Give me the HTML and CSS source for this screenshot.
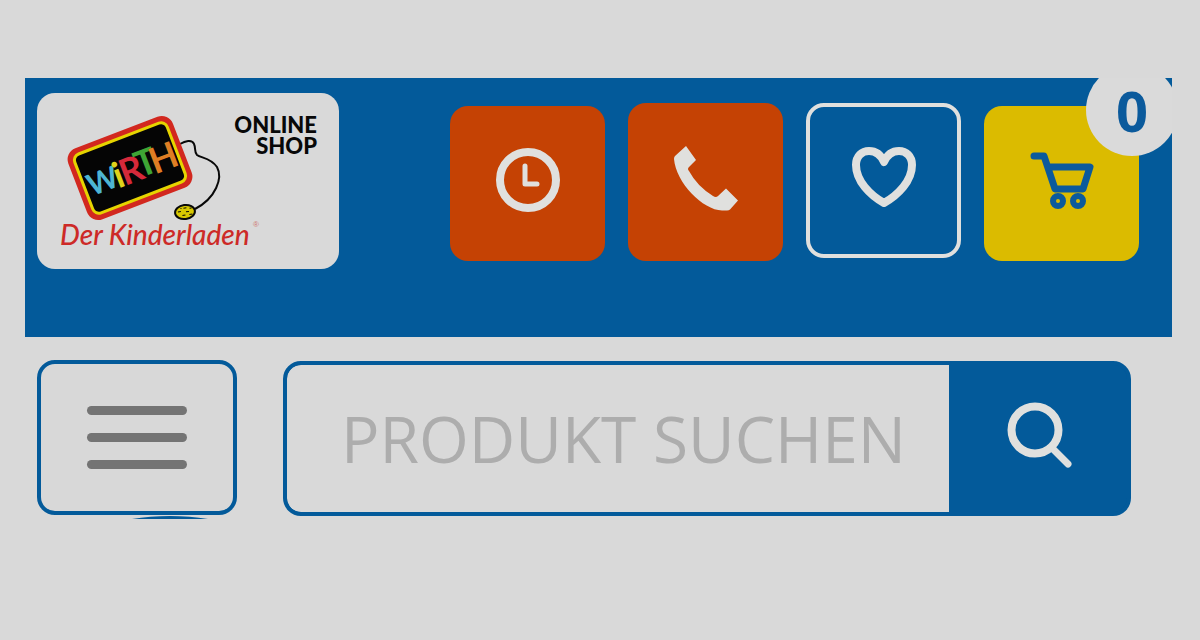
FILE: index.html
```html
<!DOCTYPE html>
<html lang="de">
<head>
<meta charset="utf-8">
<meta name="viewport" content="width=device-width, initial-scale=1">
<title>Wirth – Der Kinderladen Online Shop</title>
<link rel="stylesheet" href="styles.css">
</head>
<body>
<div class="shop">
  <header class="header">
    <a class="brand" href="#" aria-label="Wirth – Der Kinderladen, Online Shop">
      <svg class="brand-art" viewBox="37 93 225 175" aria-hidden="true">
        <path class="cord" d="M180 144c5-3 12-5 14 0 2 4 0 8 3 11 4 3 14 3 20 12 6 11-1 31-22 42"/>
        <g transform="translate(130 168) rotate(-21)">
          <rect class="frame-red" x="-56" y="-38" width="112" height="76" rx="12"/>
          <rect class="frame-yellow" x="-51" y="-33" width="102" height="66" rx="8"/>
          <rect class="frame-black" x="-48" y="-30" width="96" height="60" rx="5"/>
          <g class="letters">
            <text class="cyan letter-wide" x="-46" y="13">W</text>
            <text class="yellow" x="-18" y="15">i</text>
            <text class="red" x="-11" y="15">R</text>
            <text class="green" x="6" y="13">T</text>
            <text class="orange" x="21" y="15">H</text>
          </g>
        </g>
        <g transform="rotate(-8 185 212)">
          <ellipse class="mouse" cx="185" cy="212" rx="10" ry="7"/>
          <path class="dots" d="M178 211h3m3-3h3m-1 4h3m-7 3h3m4 0h3m-2-6h2m-11-1h1"/>
        </g>
        <text class="script" x="60" y="245">Der Kinderladen</text>
        <text class="reg" x="253" y="227">®</text>
      </svg>
      <span class="brand-label">ONLINE<br>SHOP</span>
    </a>
    <nav class="actions" aria-label="Service">
      <button class="tile tile-orange" type="button" aria-label="Öffnungszeiten">
        <svg class="icon" viewBox="0 0 64 64" aria-hidden="true">
          <circle cx="32" cy="32" r="28" fill="none" stroke="currentColor" stroke-width="8"/>
          <path d="M29 18v18h12" fill="none" stroke="currentColor" stroke-width="5" stroke-linecap="round" stroke-linejoin="round"/>
        </svg>
      </button>
      <button class="tile tile-orange tile-tall" type="button" aria-label="Telefon">
        <svg class="icon" viewBox="0 0 64 64" aria-hidden="true">
          <path d="M12 0L1 10Q0 11 0 13C2 37 29 64 48 64.500h5q2 0 3-1l8-9L52 42.500 44 50q-2 2-5 0Q23 40 15 25q-2-2 0-4l7-7z" fill="currentColor"/>
        </svg>
      </button>
      <button class="tile tile-outline" type="button" aria-label="Merkliste">
        <svg class="icon" viewBox="0 0 64 64" aria-hidden="true">
          <path d="M32 56C18 48 4 34 4 18 4 9 10 4 17 4c7 0 12 4 15 11C35 8 40 4 47 4c7 0 13 5 13 14 0 16-14 30-28 38z" fill="none" stroke="currentColor" stroke-width="8" stroke-linejoin="round"/>
        </svg>
      </button>
      <div class="cart">
        <button class="tile tile-yellow" type="button" aria-label="Warenkorb">
          <svg class="icon" viewBox="0 0 64 64" aria-hidden="true">
            <g fill="none" stroke="currentColor" stroke-linecap="round" stroke-linejoin="round">
              <path d="M4 8h10l11 33h28l7-22H18" stroke-width="7"/>
              <circle cx="28" cy="53" r="5" stroke-width="6"/>
              <circle cx="48" cy="53" r="5" stroke-width="6"/>
            </g>
          </svg>
        </button>
        <span class="badge">0</span>
      </div>
    </nav>
  </header>
  <div class="toolbar">
    <button class="menu" type="button" aria-label="Menü">
      <span class="bar"></span><span class="bar"></span><span class="bar"></span>
    </button>
    <form class="search" role="search">
      <input class="search-input" type="text" aria-label="Produkt suchen" placeholder="PRODUKT SUCHEN">
      <button class="search-button" type="submit" aria-label="Suchen">
        <svg class="icon" viewBox="0 0 64 64" aria-hidden="true">
          <g fill="none" stroke="currentColor" stroke-linecap="round">
            <circle cx="27" cy="27" r="23.500" stroke-width="8"/>
            <path d="M45 46l15 15" stroke-width="7"/>
          </g>
        </svg>
      </button>
    </form>
    <span class="peek"></span>
  </div>
</div>
</body>
</html>
```
FILE: styles.css
```css
:root {
  --page: #d9d9d9;
  --blue: #035a9a;
  --orange: #c54204;
  --yellow: #dbbb00;
  --light: #e0e0de;
}

* { box-sizing: border-box; }

body {
  margin: 0;
  background: var(--page);
  font-family: "Open Sans", sans-serif;
}

button { padding: 0; border: 0; font: inherit; cursor: pointer; }

.shop { margin: 78px 28px 78px 25px; }

.header {
  display: flex;
  justify-content: space-between;
  align-items: flex-start;
  padding: 15px 33px 68px 12px;
  overflow: hidden;
  background: var(--blue);
}

.brand {
  display: flex;
  width: 302px;
  height: 176px;
  border-radius: 18px;
  background: var(--page);
  color: #080808;
  text-decoration: none;
}

.brand-art { flex: none; width: 225px; height: 175px; }

.brand-label {
  flex: 1;
  margin-left: -32px;
  padding: 21px 22px 0 0;
  font: 900 22px/21px Lato, sans-serif;
  text-align: right;
}

.cord { fill: none; stroke: #080808; stroke-width: 2; }
.frame-red { fill: #d2281f; }
.frame-yellow { fill: #e6d400; }
.frame-black { fill: #050505; }
.letters { font: 700 36px Lato, sans-serif; }
.letter-wide { font-size: 30px; }
.cyan { fill: #4db5d3; }
.yellow { fill: #dfd21c; }
.red { fill: #d6293a; }
.green { fill: #3fa535; }
.orange { fill: #df7e24; }
.mouse { fill: #d8c800; stroke: #080808; stroke-width: 2; }
.dots { fill: none; stroke: #080808; stroke-width: 1; }
.script { fill: #cd2a27; font: italic 500 28px Lato, sans-serif; }
.reg { fill: #cf7772; font: 8px "Liberation Sans", sans-serif; }

.actions { display: flex; align-items: flex-end; gap: 23px; padding-top: 10px; }

.tile {
  display: grid;
  place-items: center;
  width: 155px;
  height: 155px;
  padding-bottom: 8px;
  border-radius: 18px;
  color: var(--light);
}

.tile-orange { background: var(--orange); }
.tile-tall { height: 158px; }
.tile-outline { margin-bottom: 3px; padding-bottom: 4px; border: 4px solid var(--light); background: transparent; }
.tile-yellow { background: var(--yellow); color: #0b5a9c; }

.icon { display: block; width: 64px; height: 64px; overflow: visible; }

.cart { position: relative; }

.badge {
  position: absolute;
  top: -42px;
  right: -39px;
  width: 92px;
  height: 92px;
  border-radius: 50%;
  background: #dadada;
  color: #0b5a9c;
  font-size: 56px;
  font-weight: 700;
  line-height: 92px;
  text-align: center;
}

.toolbar {
  position: relative;
  display: flex;
  gap: 46px;
  padding: 23px 41px 3px 12px;
  overflow: hidden;
}

.menu {
  z-index: 1;
  display: flex;
  flex: none;
  flex-direction: column;
  align-items: center;
  justify-content: center;
  gap: 18px;
  width: 200px;
  height: 155px;
  border: 4px solid var(--blue);
  border-radius: 18px;
  background: #d8d8d8;
}

.bar { width: 100px; height: 9px; border-radius: 5px; background: #747474; }

.search {
  display: flex;
  flex: 1;
  height: 155px;
  min-width: 0;
  margin-top: 1px;
  overflow: hidden;
  border: 4px solid var(--blue);
  border-radius: 18px;
  background: var(--blue);
}

.search-input {
  flex: 1;
  min-width: 0;
  padding: 0 0 0 54px;
  border: 0;
  border-radius: 14px 0 0 14px;
  outline: 0;
  background: var(--page);
  color: #555;
  font: 400 64px "Open Sans", sans-serif;
}

.search-input::placeholder { color: #adadad; opacity: 1; }

.search-button {
  display: grid;
  place-items: center;
  width: 178px;
  padding: 0 0 8px 4px;
  background: var(--blue);
  color: var(--light);
}

.peek {
  position: absolute;
  bottom: -77px;
  left: 45px;
  width: 200px;
  height: 80px;
  border-radius: 50%;
  background: var(--blue);
}
```
